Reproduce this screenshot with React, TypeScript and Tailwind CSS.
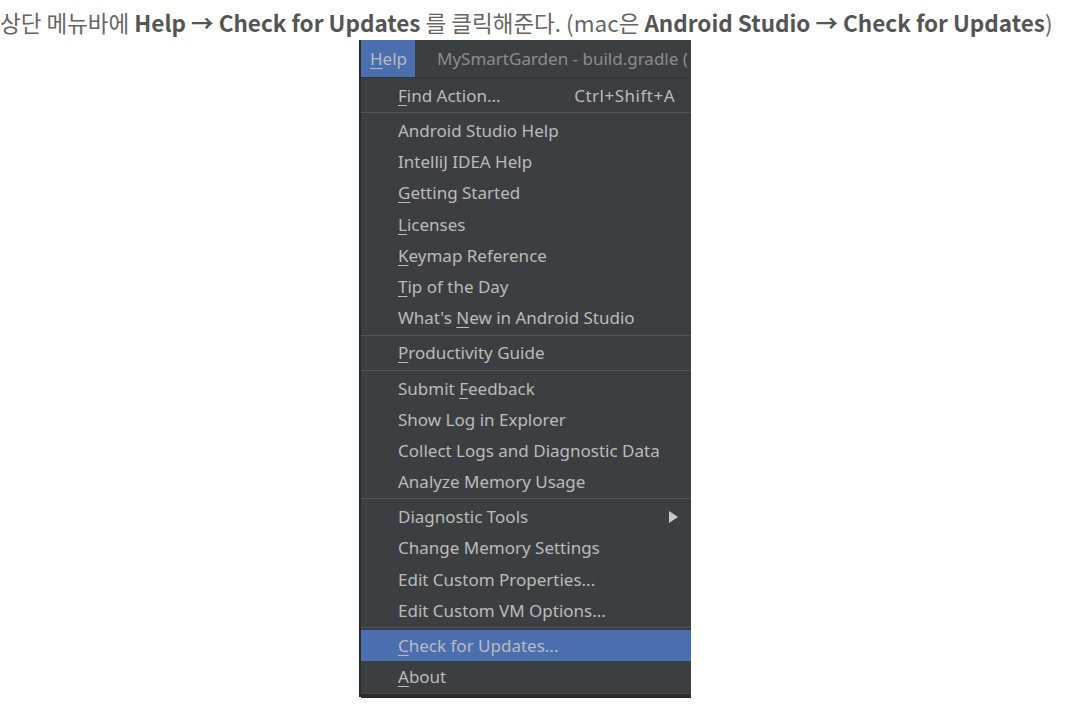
import React from 'react'

type Item = { label: React.ReactNode; shortcut?: string; arrow?: boolean; active?: boolean }

const U = ({ c }: { c: string }) => <span className="underline underline-offset-[3px] decoration-1">{c}</span>

const groups: Item[][] = [
  [{ label: <><U c="F" />ind Action...</>, shortcut: 'Ctrl+Shift+A' }],
  [
    { label: 'Android Studio Help' },
    { label: 'IntelliJ IDEA Help' },
    { label: <><U c="G" />etting Started</> },
    { label: <><U c="L" />icenses</> },
    { label: <><U c="K" />eymap Reference</> },
    { label: <><U c="T" />ip of the Day</> },
    { label: <>What's <U c="N" />ew in Android Studio</> },
  ],
  [{ label: <><U c="P" />roductivity Guide</> }],
  [
    { label: <>Submit <U c="F" />eedback</> },
    { label: 'Show Log in Explorer' },
    { label: 'Collect Logs and Diagnostic Data' },
    { label: 'Analyze Memory Usage' },
  ],
  [
    { label: 'Diagnostic Tools', arrow: true },
    { label: 'Change Memory Settings' },
    { label: 'Edit Custom Properties...' },
    { label: 'Edit Custom VM Options...' },
  ],
  [
    { label: <><U c="C" />heck for Updates...</>, active: true },
    { label: <><U c="A" />bout</> },
  ],
]

const MenuRow = ({ item }: { item: Item }) => (
  <div
    className={`h-[31.2px] flex items-center pl-[37px] pr-[12px] ${item.active ? 'bg-[#4b6eaf]' : ''}`}
  >
    <span className="flex-1 whitespace-nowrap">{item.label}</span>
    {item.shortcut && <span className="whitespace-nowrap mr-[4px] tracking-[0.5px]">{item.shortcut}</span>}
    {item.arrow && (
      <svg width="9" height="12" viewBox="0 0 9 12" className="mr-[1px]">
        <path d="M0 0 L9 6 L0 12 Z" fill="#c8c8c8" />
      </svg>
    )}
  </div>
)

export default function App() {
  return (
    <div className="w-[1066px] h-[712px] bg-white overflow-hidden">
      {/* caption */}
      <p className="whitespace-nowrap pt-[7px] text-[22.5px] leading-[30px] text-[#666666] font-['Noto_Sans_CJK_KR',sans-serif]">
        상단 메뉴바에 <b className="text-[#555555]">Help → Check for Updates</b> 를 클릭해준다. (mac은{' '}
        <b className="text-[#555555]">Android Studio → Check for Updates</b>)
      </p>

      {/* screenshot of the help menu */}
      <div className="ml-[359px] mt-[3px] w-[332px] h-[657px] bg-[#2b2b2b] pl-[2px] flex flex-col font-['Noto_Sans','Open_Sans',sans-serif] text-[17px] text-[#bbbbbb]">
        <div className="h-[38px] shrink-0 flex items-center bg-[#3c3f41] border-b border-[#333537]">
          <div className="h-full w-[54px] bg-[#4b6eaf] flex items-center pl-[9px]">
            <U c="H" />elp
          </div>
          <span className="ml-[22px] whitespace-nowrap overflow-hidden text-[#8c8c8c]">MySmartGarden - build.gradle (</span>
        </div>
        <div className="flex-1 bg-[#3c3f41] pt-[2px]">
          {groups.map((g, gi) => (
            <div key={gi}>
              {gi > 0 && (
                <div className="h-[4px] pt-[1px]">
                  <div className="h-px bg-[#515658]" />
                </div>
              )}
              {g.map((item, ii) => (
                <MenuRow key={ii} item={item} />
              ))}
            </div>
          ))}
        </div>
        <div className="h-[5px] shrink-0 bg-[#2b2b2b] border-t border-[#45484a]" />
      </div>
    </div>
  )
}
